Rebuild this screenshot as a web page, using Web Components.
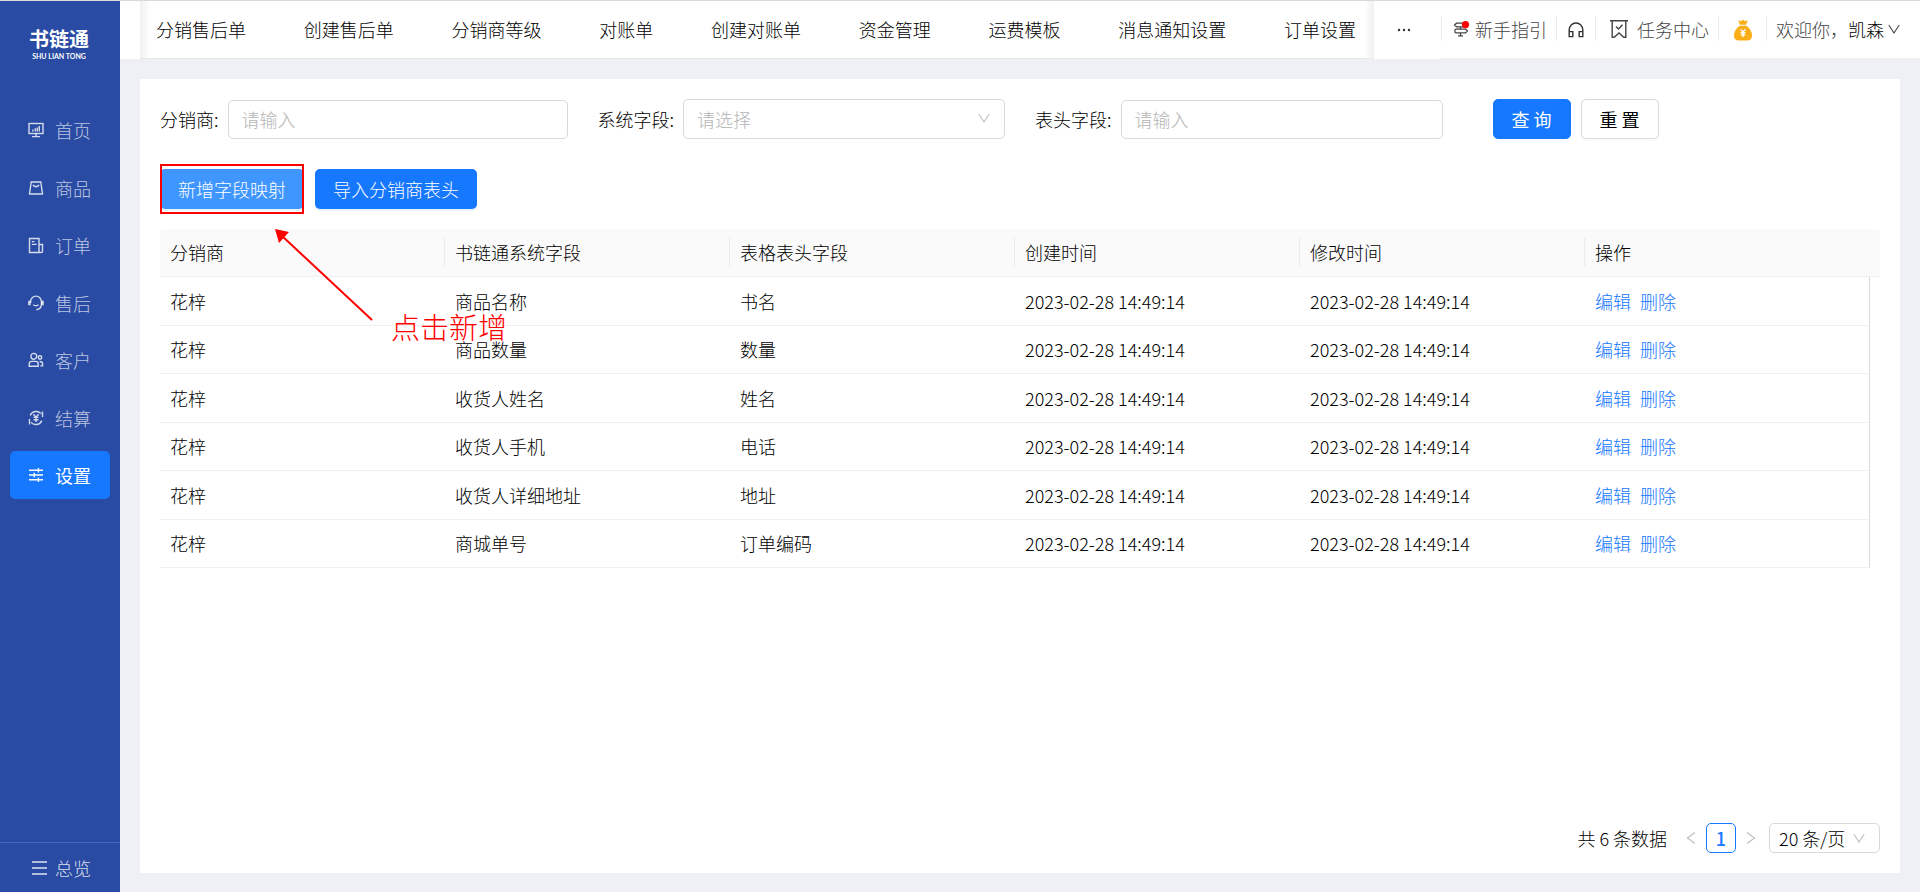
<!DOCTYPE html>
<html lang="zh-CN">
<head>
<meta charset="utf-8">
<title>书链通 - 字段映射</title>
<style>
  body { margin: 0; font: 300 18px/24px "Noto Sans CJK SC", sans-serif; color: #000; }
</style>
</head>
<body>
<app-shell>
  <side-nav slot="side">
    <side-item icon="home">首页</side-item>
    <side-item icon="goods">商品</side-item>
    <side-item icon="order">订单</side-item>
    <side-item icon="service">售后</side-item>
    <side-item icon="client">客户</side-item>
    <side-item icon="settle">结算</side-item>
    <side-item icon="config" active>设置</side-item>
  </side-nav>
  <top-bar slot="top"></top-bar>
  <filter-form></filter-form>
  <tool-row></tool-row>
  <mapping-table></mapping-table>
  <page-footer></page-footer>
</app-shell>

<script>
const svg = (w, h, body, extra = '') =>
  `<svg width="${w}" height="${h}" viewBox="0 0 ${w} ${h}" fill="none" stroke="currentColor" stroke-width="1.4" aria-hidden="true" ${extra}>${body}</svg>`;

const ICONS = {
  home: svg(16, 16, '<rect x="1" y="1.5" width="14" height="10"/><path d="M4.8 9.5V7.5M7.3 9.5V6.3M9.3 9.5V5.6M11.3 9.5V4M8 11.5v2.5M4 14.6h8"/>'),
  goods: svg(16, 16, '<path d="M3.2 2h9.6l1.7 12H1.5zM4.9 5q3.1 3.4 6.2 0"/>'),
  order: svg(16, 17, '<path d="M11 15.5H1.500v-14H11v14h2.2q1.3 0 1.3-1.3V7.5H11M3.8 4.6h2.7M3.8 7.4h4.8"/>'),
  service: svg(16, 16, '<path d="M2.6 8V6.500a5.4 5.4 0 0 1 10.8 0V9q0 5-5 5.8M5.2 9.8q2.6 2 5.4 0"/><path d="M1.4 5.8v4.4M14.6 5.8v4.4" stroke-width="2.4"/>'),
  client: svg(16, 16, '<circle cx="5.8" cy="4.3" r="2.9"/><path d="M1.2 14.2v-2.4q0-2.4 2.500-2.4h4q2.500 0 2.500 2.4v2.4z"/><circle cx="12" cy="5.5" r="1.7"/><path d="M11.6 9.5q3 0 3 2.4v2h-2.4"/>'),
  settle: svg(16, 16, '<path d="M2.2 5.400A6.500 6.500 0 0 1 13 3.6M13.8 10.6A6.500 6.500 0 0 1 3 12.4M14.5 1.500V7M1.5 14.500V9M5.4 4.200L8 7.200l2.6-3M8 7v5M5.600 7.400h4.800M5.600 9.700h4.800"/>'),
  config: svg(16, 16, '<path d="M1 3.2h14M1 8h14M1 12.8h14M10.4 1v4.4M6.2 5.8v4.4M10.4 10.6V15"/>'),
  menu: svg(16, 16, '<path d="M0 2h15M0 8h15M0 14h15"/>'),
  guide: svg(17, 16, '<path d="M13 2.2H3.500L1.500 4l2 1.800H13M3 8.200h9.500L14.500 10l-2 1.800H3q-1 0-1-1V9.200q0-1 1-1M7.500 5.800v2.400M7.500 11.800v3M5 14.800h5" stroke-width="1.2"/><circle cx="12.5" cy="3.6" r="3.6" fill="#f00" stroke="none"/>'),
  headset: svg(16, 16, '<path d="M1.2 14V7.800a6.800 6.800 0 0 1 13.600 0V14M1.200 9.600h3.600v5H1.200zM11.200 9.600h3.600v5h-3.600z"/>'),
  task: svg(18, 20, '<path d="M0 1.800h18M2.200 1.800v16.400h2L9 14l4.800 4.200h2V1.800M6 7.400l2.500 2.500 4-4.200"/>'),
  bag: svg(20, 22, '<path d="M5.200 1.200L8 2.200l2-1.400 2 1.400 2.800-1-1.700 4.600H6.900z" fill="#faad14" stroke="none"/><path d="M6.600 6.800h6.800Q19 11 19 16.400 19 21.400 14 21.400H6Q1 21.400 1 16.400 1 11 6.600 6.800z" fill="#faad14" stroke="none"/><path d="M7.600 10.400L10 13l2.400-2.600M10 13v5M7.600 13.800h4.800M7.600 15.900h4.800" stroke="#fff"/>'),
  down: svg(12, 12, '<path d="M0.8 2L6 10 11.2 2" stroke-width="1.1"/>'),
  prev: svg(10, 14, '<path d="M9 1.400L1.400 7 9 12.600" stroke-width="1.2"/>'),
  next: svg(10, 14, '<path d="M1 1.400L8.600 7 1 12.600" stroke-width="1.2"/>')
};

const BASE = `*{box-sizing:border-box}
  svg{display:block;flex:none}
  a{color:inherit;text-decoration:none}
  button,input,select{font:inherit;color:inherit;margin:0}`;

function define(name, render) {
  customElements.define(name, class extends HTMLElement {
    constructor() {
      super();
      this.attachShadow({ mode: 'open' });
    }
    connectedCallback() {
      this.shadowRoot.innerHTML = render(this);
    }
  });
}

define('app-shell', () => `<style>${BASE}
  :host{display:grid;grid-template-columns:120px minmax(0,1fr);grid-template-rows:auto 1fr;min-height:100vh;box-sizing:border-box;border-top:1px solid #d9d9d9;background:#eff0f5}
  ::slotted([slot=side]){grid-row:1 / 3}
  main{display:flex;flex-direction:column;margin:20px 20px 19px;padding:20px;background:#fff}
</style>
<slot name="side"></slot><slot name="top"></slot><main><slot></slot></main>`);

define('side-nav', () => `<style>${BASE}
  :host{display:flex;flex-direction:column;background:#294ba3;color:#fff}
  .logo{display:flex;flex-direction:column;align-items:center;padding:26px 2px 45px 0}
  .logo b{font-size:20px;line-height:24px;font-weight:700}
  .logo small{font:700 7px/10px Lato,sans-serif}
  nav{display:flex;flex-direction:column;flex:1}
  .all{display:flex;align-items:center;gap:7px;height:50px;padding-left:32px;border-top:1px solid #4967b2;color:rgba(255,255,255,.85)}
</style>
<div class="logo"><b>书链通</b><small>SHU LIAN TONG</small></div>
<nav><slot></slot></nav>
<a class="all" href="#">${ICONS.menu}<span>总览</span></a>`);

define('side-item', el => `<style>${BASE}
  :host{display:block;margin:0 10px 9px}
  :host(:nth-child(odd)){margin-bottom:10px}
  a{display:flex;align-items:center;gap:11px;height:48px;padding-left:18px;border-radius:5px;color:rgba(255,255,255,.7)}
  svg{color:rgba(255,255,255,.8)}
  :host([active]) a{background:#1677ff;color:#fff;font-weight:400}
  :host([active]) svg{color:#fff}
</style>
<a href="#">${ICONS[el.getAttribute('icon')]}<span><slot></slot></span></a>`);

define('top-bar', () => `<style>${BASE}
  :host{display:flex;height:58px;background:#fff;padding-left:20px}
  .tabs{flex:1;display:flex;justify-content:space-between;align-items:center;padding:0 18px 2px 16px;white-space:nowrap;border-bottom:1px solid #e6e7ea;
    background:linear-gradient(90deg,#f0f0f0,#fff 10px,#fff calc(100% - 10px),#f0f0f0)}
  .cell{position:relative;display:flex;align-items:center;padding-bottom:2px;border-bottom:1px solid #f0f0f0;color:#444;white-space:nowrap}
  .cell+.cell::before{content:"";position:absolute;left:0;top:15px;height:25px;width:1px;background:#ebebeb}
  .more{width:67px;justify-content:center;border:0;padding:0 8px 0 0;background:none;color:#333}
  .guide{gap:5px;padding:0 9px 2px 12px}
  .phone{padding:0 11px 0 12px;color:#333}
  .task{gap:9px;padding:0 9px 2px 15px}
  .bag{padding:0 13px 0 15px}
  .user{padding:0 20px 2px 10px}
  .user b{font-weight:300;color:#000;margin-right:4px}
</style>
<nav class="tabs">${['分销售后单','创建售后单','分销商等级','对账单','创建对账单','资金管理','运费模板','消息通知设置','订单设置'].map(t => `<a href="#">${t}</a>`).join('')}</nav>
<button class="cell more" aria-label="更多">${svg(14, 4, '<circle cx="2" cy="2" r="1.2"/><circle cx="7" cy="2" r="1.2"/><circle cx="12" cy="2" r="1.2"/>', 'style="fill:currentColor;stroke:none"')}</button>
<a class="cell guide" href="#">${ICONS.guide}<span>新手指引</span></a>
<a class="cell phone" href="#" aria-label="客服">${ICONS.headset}</a>
<a class="cell task" href="#">${ICONS.task}<span>任务中心</span></a>
<a class="cell bag" href="#" aria-label="资金">${ICONS.bag}</a>
<a class="cell user" href="#"><span>欢迎你，</span><b>凯森</b>${ICONS.down}</a>`);

define('filter-form', () => `<style>${BASE}
  :host{display:block}
  form{display:grid;grid-template-columns:repeat(4,1fr);margin-right:-30px}
  .field{display:flex;align-items:center;padding-right:30px;height:40px}
  label{white-space:nowrap;margin-right:9px}
  i{font-style:normal}
  .box{position:relative;flex:1;min-width:0;display:flex}
  input,select{width:100%;height:40px;border:1px solid #d9d9d9;border-radius:5px;background:#fff;padding:0 13px;appearance:none;outline:0}
  input{height:39px}
  select,input::placeholder{color:#b4b4b4;opacity:1}
  .box svg{position:absolute;right:15px;top:13px;color:#bfbfbf;pointer-events:none}
  .actions{display:flex;gap:10px;padding-left:20px}
  button{height:40px;padding:0 18px;border:1px solid #d9d9d9;border-radius:5px;background:#fff;box-shadow:0 2px 0 rgba(0,0,0,.02);font-weight:400}
  .primary{background:#1677ff;border-color:#1677ff;color:#fff}
</style>
<form>
  <div class="field"><label for="dealer">分销商<i>:</i></label><div class="box"><input id="dealer" placeholder="请输入"></div></div>
  <div class="field"><label for="sys">系统字段<i>:</i></label><div class="box"><select id="sys"><option>请选择</option></select>${ICONS.down}</div></div>
  <div class="field"><label for="head">表头字段<i>:</i></label><div class="box"><input id="head" placeholder="请输入"></div></div>
  <div class="actions"><button type="button" class="primary">查 询</button><button type="reset">重 置</button></div>
</form>`);

define('tool-row', () => `<style>${BASE}
  :host{position:relative;z-index:1;display:flex;gap:11px;margin:30px 0 20px}
  .marked{position:relative;display:flex}
  button{height:40px;padding:0 18px;border:0;border-radius:5px;background:#1677ff;color:#fff;box-shadow:0 2px 0 rgba(5,145,255,.1);white-space:nowrap}
  .marked button{background:#4096ff}
  .frame{position:absolute;inset:-5px 0;border:2px solid #f00;pointer-events:none}
  .arrow{position:absolute;left:115px;top:60px;pointer-events:none}
  .note{position:absolute;left:231px;top:141px;font-size:29px;line-height:32px;color:#f00;white-space:nowrap;pointer-events:none}
</style>
<div class="marked"><button>新增字段映射</button><div class="frame"></div>
${svg(100, 94, '<path d="M6 6L97 91" stroke="#f00" stroke-width="2"/><path d="M0 0L14 3 4 14z" fill="#f00" stroke="none"/>', 'class="arrow"')}
<span class="note">点击新增</span></div>
<button>导入分销商表头</button>`);

const ROWS = [['商品名称','书名'],['商品数量','数量'],['收货人姓名','姓名'],['收货人手机','电话'],['收货人详细地址','地址'],['商城单号','订单编码']];
const TIME = '2023-02-28 14:49:14';

define('mapping-table', () => `<style>${BASE}
  :host{display:grid;grid-template-columns:minmax(0,1fr) 10px;align-items:start}
  table{width:100%;table-layout:fixed;border-collapse:separate;border-spacing:0}
  th,td{padding:0 10px 1px;text-align:left;font-weight:300;border-bottom:1px solid #f0f0f0}
  th{position:relative;height:48px;background:#fafafa}
  th:first-child{border-top-left-radius:5px}
  th+th::before{content:"";position:absolute;left:-1px;top:9px;height:28px;width:1px;background:#ebebeb}
  td{height:48px}
  tr:nth-child(odd) td{height:49px}
  td:last-child{border-right:1px solid #d9d9d9}
  td a{color:#1677ff;margin-right:9px}
  .gutter{height:48px;background:#fafafa;border-bottom:1px solid #f0f0f0;border-top-right-radius:5px}
</style>
<table>
  <thead><tr>${['分销商','书链通系统字段','表格表头字段','创建时间','修改时间','操作'].map(h => `<th>${h}</th>`).join('')}</tr></thead>
  <tbody>${ROWS.map(([sys, head]) => `<tr><td>花梓</td><td>${sys}</td><td>${head}</td><td>${TIME}</td><td>${TIME}</td><td><a href="#">编辑</a><a href="#">删除</a></td></tr>`).join('')}</tbody>
</table><div class="gutter"></div>`);

define('page-footer', () => `<style>${BASE}
  :host{display:flex;justify-content:flex-end;align-items:center;margin-top:auto;height:30px}
  button{display:flex;align-items:center;justify-content:center;width:30px;height:30px;padding:0;border:1px solid transparent;border-radius:5px;background:none}
  .arrow{color:#bfbfbf}
  .now{border-color:#1677ff;color:#1677ff;font-weight:500}
  span{margin-right:9px}
  .size{position:relative;margin-left:3px}
  select{display:block;width:111px;height:30px;padding:0 9px;border:1px solid #d9d9d9;border-radius:5px;background:#fff;appearance:none}
  .size svg{position:absolute;right:15px;top:9px;color:#bfbfbf;pointer-events:none}
</style>
<span>共 6 条数据</span>
<button class="arrow" aria-label="上一页">${ICONS.prev}</button>
<button class="now">1</button>
<button class="arrow" aria-label="下一页">${ICONS.next}</button>
<div class="size"><select aria-label="每页条数"><option>20 条/页</option></select>${ICONS.down}</div>`);
</script>
</body>
</html>
